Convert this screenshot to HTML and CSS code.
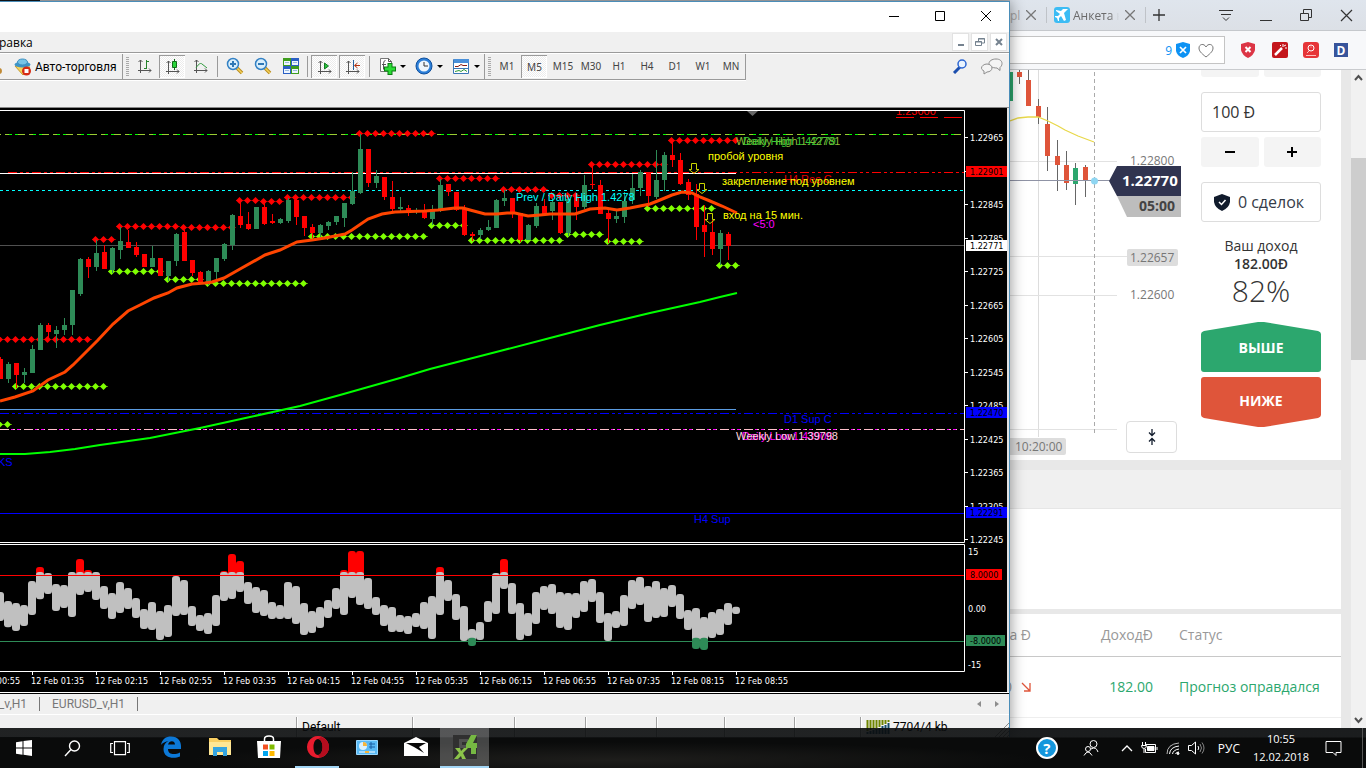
FILE: index.html
```html
<!DOCTYPE html>
<html lang="ru">
<head>
<meta charset="utf-8">
<title>Торговый терминал</title>
<link rel="stylesheet" href="styles.css">
</head>
<body>
<div class="desktop">
  <div class="windows">
    <section class="terminal">
      <div class="titlebar">
        <button class="win-btn" aria-label="Свернуть"><svg width="12" height="12"><path d="M1 6.500h10" stroke="#000"/></svg></button>
        <button class="win-btn" aria-label="Развернуть"><svg width="12" height="12"><path d="M1.500 1.500h9v9h-9z" fill="none" stroke="#000"/></svg></button>
        <button class="win-btn" aria-label="Закрыть"><svg width="12" height="12"><path d="M1 1l10 10M11 1L1 11" stroke="#000"/></svg></button>
      </div>
      <div class="menubar">
        <button class="menu-item">Справка</button>
        <div class="mdi">
          <button aria-label="Свернуть график"><svg width="14" height="14"><path d="M4 10h6" stroke="#75828f" stroke-width="2"/></svg></button>
          <button aria-label="Восстановить график"><svg width="14" height="14" fill="none" stroke="#75828f"><path d="M5.500 6V3.500h6V8H9M5 4h7M2.500 6.500h6v4h-6zM2 7h7"/></svg></button>
          <button aria-label="Закрыть график"><svg width="14" height="14"><path d="M4 4l6 6M10 4l-6 6" stroke="#75828f" stroke-width="2"/></svg></button>
        </div>
      </div>
      <div class="toolbar-row">
        <div class="toolbar">
          <button class="auto">
            <svg width="20" height="20"><circle cx="-1" cy="14" r="3" fill="#c08a35"/></svg>
            <svg width="18" height="18"><path d="M1 8l8 9 7-8z" fill="#f4d35b" stroke="#c59b2d"/><ellipse cx="8.500" cy="6.500" rx="8" ry="3" fill="#3c94c8"/><ellipse cx="8.500" cy="4" rx="5" ry="3" fill="#76c4e8" stroke="#3c8fbf"/><circle cx="12.500" cy="13" r="4.500" fill="#d62b14"/><path d="M10.500 11h4v4h-4z" fill="#fff"/></svg>
            <span>Авто-торговля</span>
          </button>
          <i class="edge"></i><i class="grip"></i>
          <button class="tool" aria-label="Бары"><svg width="18" height="18"><path d="M4.500 3v13M2 13.500h13M2.500 5l2-2 2 2M13 11.500l2 2-2 2" stroke="#555" fill="none"/><path d="M10.500 3v9M8 11.500h3M11 4.500h2" stroke="#26822b" fill="none"/></svg></button>
          <button class="tool on" aria-label="Свечи"><svg width="18" height="18"><path d="M4.500 3v13M2 13.500h13M2.500 5l2-2 2 2M13 11.500l2 2-2 2" stroke="#555" fill="none"/><path d="M10.500 1v11" stroke="#126b18"/><path d="M8.500 3.500h4v6h-4z" fill="#29d53a" stroke="#126b18"/></svg></button>
          <button class="tool" aria-label="Линия"><svg width="18" height="18"><path d="M4.500 3v13M2 13.500h13M2.500 5l2-2 2 2M13 11.500l2 2-2 2" stroke="#555" fill="none"/><path d="M4 11c3-5 5-5 6-4l5 4" stroke="#2f9a3d" fill="none"/></svg></button>
          <i class="sep"></i>
          <button class="tool" aria-label="Увеличить"><svg width="18" height="18"><path d="M11 11l5 5" stroke="#b88b1c" stroke-width="3.500"/><path d="M11 11l5 5" stroke="#f5d25c" stroke-width="1.500"/><circle cx="7" cy="7" r="5.500" fill="#d9effc" stroke="#3381c4" stroke-width="1.500"/><path d="M4 7h6M7 4v6" stroke="#2f78b5" stroke-width="2"/></svg></button>
          <button class="tool" aria-label="Уменьшить"><svg width="18" height="18"><path d="M11 11l5 5" stroke="#b88b1c" stroke-width="3.500"/><path d="M11 11l5 5" stroke="#f5d25c" stroke-width="1.500"/><circle cx="7" cy="7" r="5.500" fill="#d9effc" stroke="#3381c4" stroke-width="1.500"/><path d="M4 7h6" stroke="#2f78b5" stroke-width="2"/></svg></button>
          <button class="tool" aria-label="Мозаика"><svg width="18" height="18"><path d="M1 1h8v8H1zM9 9h8v8H9z" fill="#3f9d1e"/><path d="M9 1h8v8H9zM1 9h8v8H1z" fill="#2a5fc4"/><path d="M2 4h6v4H2zM10 4h6v4h-6zM2 12h6v4H2zM10 12h6v4h-6z" fill="#eef6ff"/><path d="M3 5.500h4M11 5.500h4M3 13.500h4M11 13.500h4" stroke="#9bbbe0"/></svg></button>
          <i class="sep"></i>
          <button class="tool on" aria-label="Автопрокрутка"><svg width="18" height="18"><path d="M4.500 3v13M2 13.500h13M2.500 5l2-2 2 2M13 11.500l2 2-2 2" stroke="#555" fill="none"/><path d="M8.500 5v6l4-3z" fill="#27c23b" stroke="#147a22"/></svg></button>
          <button class="tool on" aria-label="Сдвиг графика"><svg width="18" height="18"><path d="M4.500 3v13M2 13.500h13M2.500 5l2-2 2 2M13 11.500l2 2-2 2" stroke="#555" fill="none"/><path d="M9.500 2v10" stroke="#235e9b"/><path d="M11 7.500h5M13.500 5l-3 2.500 3 2.500" stroke="#b43210" fill="none"/></svg></button>
          <i class="sep"></i>
          <button class="tool drop" aria-label="Индикаторы"><svg width="20" height="20"><path d="M3.500 2.500h8l3 3v10h-11z" fill="#fff" stroke="#777"/><path d="M11.500 2.500v3h3M8.500 4.500q-2 0-2 3v6M5 8.500h4" fill="none" stroke="#555"/><path d="M13 7v12M7 13h12" stroke="#0b7d12" stroke-width="5"/><path d="M13 8v10M8 13h10" stroke="#2bdc35" stroke-width="3"/></svg><b></b></button>
          <button class="tool drop" aria-label="Периоды"><svg width="20" height="20"><circle cx="10" cy="10" r="8" fill="#2c7fd8" stroke="#0e4f9d"/><circle cx="10" cy="10" r="5.500" fill="#edf6fd"/><path d="M10 6v4h4" stroke="#333" fill="none"/></svg><b></b></button>
          <button class="tool drop" aria-label="Шаблоны"><svg width="20" height="20"><path d="M2.500 3.500h15v14h-15z" fill="#fff" stroke="#3a76b5"/><path d="M3 3h15v4H3z" fill="#4a90d9"/><path d="M4 10.500h3l3-2 2 1h4" stroke="#8c1d12" fill="none"/><path d="M3 12.500h14" stroke="#3a76b5"/><path d="M4 15.500l4-1 2 1 3-2 3 2" stroke="#2d9936" fill="none"/></svg><b></b></button>
          <i class="sep edge2"></i><i class="grip"></i>
          <button class="tool tf">M1</button><button class="tool tf on">M5</button><button class="tool tf">M15</button><button class="tool tf">M30</button><button class="tool tf">H1</button><button class="tool tf">H4</button><button class="tool tf">D1</button><button class="tool tf">W1</button><button class="tool tf">MN</button>
        </div>
        <div class="tool-right">
          <button aria-label="Поиск"><svg width="16" height="16"><path d="M8 9l-6 6" stroke="#1c4fae" stroke-width="3"/><circle cx="10" cy="6" r="4" fill="#eaf4ff" stroke="#2c66d2" stroke-width="1.500"/></svg></button>
          <button aria-label="Сообщения"><svg width="24" height="18" fill="#f4f4f4" stroke="#8d8d8d"><path d="M16 2c4 0 6 2 6 4.500 0 2-1 3-2 4v3l-3-2.500c-5 0-8-2-8-4.500S12 2 16 2z"/><path d="M7 7c3 0 5 2 5 4s-2 4-5 4l-3 2v-3c-2-1-2.500-2-2.500-3C1.500 9 4 7 7 7z"/></svg></button>
        </div>
      </div>
      <svg class="chart" id="chart" viewBox="0 108 1007 584" preserveAspectRatio="xMaxYMid meet" role="img" aria-label="График EURUSD"></svg>
      <div class="tabs">
        <button>EURUSD_v,H1</button><button>EURUSD_v,H1</button>
        <span class="tab-arrows"><button aria-label="Назад"><svg width="6" height="8"><path d="M5 1v6L1 4z" fill="#8d8d8d"/></svg></button><button aria-label="Вперёд"><svg width="6" height="8"><path d="M1 1v6l4-3z" fill="#8d8d8d"/></svg></button></span>
      </div>
      <div class="status">
        <span class="s-first"></span><span class="s-default">Default</span><span class="s-102"></span><span class="s-71"></span><span class="s-71"></span><span class="s-68"></span><span class="s-70"></span><span class="s-66"></span>
        <span class="s-net"><svg width="24" height="14"><path d="M1.500 0v11M4.500 0v10M7.500 0v9M10.500 0v8M13.500 0v7M16.500 0v5M19.500 0v4M22.500 0v2" stroke="#6e8500" stroke-width="2"/><path d="M1.500 12v2M4.500 11v3M7.500 10v4M10.500 9v5M13.500 8v6M16.500 6v8M19.500 5v9M22.500 3v11" stroke="#124b6b" stroke-width="2"/></svg>7704/4 kb</span>
        <svg class="resize" width="15" height="15"><path d="M1 15L15 1M5 15L15 5M9 15l6-6M13 15l2-2" stroke="#888"/></svg>
      </div>
    </section>

    <section class="browser">
      <div class="tabstrip">
        <span class="tab-cut">pl</span>
        <button class="x" aria-label="Закрыть вкладку"><svg width="10" height="10"><path d="M0 0l10 10M10 0L0 10" stroke="#777" stroke-width="1.300"/></svg></button>
        <i class="tdiv"></i>
        <svg class="fav" width="16" height="16"><rect width="16" height="16" rx="3" fill="#3cbcf4"/><path d="M2 3l5 1 2-2h5l-4 4 2 7-2 1-3-5-2 2v3l-1 0-1-3-2-1v-1h3l2-2-4-3z" fill="#fff"/></svg>
        <span class="tab-title">Анкета на</span>
        <button class="x" aria-label="Закрыть вкладку"><svg width="10" height="10"><path d="M0 0l10 10M10 0L0 10" stroke="#777" stroke-width="1.300"/></svg></button>
        <i class="tdiv"></i>
        <button class="x plus" aria-label="Новая вкладка"><svg width="12" height="12"><path d="M6 0v12M0 6h12" stroke="#333" stroke-width="1.300"/></svg></button>
        <div class="wctl">
          <button aria-label="Меню вкладок"><svg width="14" height="13" fill="none" stroke="#333"><path d="M0 1.500h14M2 5.500h10M4 8.500l3 3 3-3"/></svg></button>
          <button aria-label="Свернуть"><svg width="13" height="13"><path d="M0 11.500h12" stroke="#333"/></svg></button>
          <button aria-label="Восстановить"><svg width="13" height="13" fill="none" stroke="#333"><path d="M3.500 4V.5h8v8H9M.5 4.500h8v7h-8z"/></svg></button>
          <button aria-label="Закрыть"><svg width="13" height="13"><path d="M1 1l11 11M12 1L1 12" stroke="#333" stroke-width="1.200"/></svg></button>
        </div>
      </div>
      <div class="addressbar">
        <div class="field"><span>9</span>
          <svg width="14" height="16"><path d="M7 0l7 2v7q-1 5-7 7-6-2-7-7V2z" fill="#0d92f4"/><path d="M4 5l6 6M10 5l-6 6" stroke="#fff" stroke-width="1.700"/></svg>
          <svg width="16" height="15"><path d="M8 14C3 10 1 8 1 5c0-4 5-5 7-1 2-4 7-3 7 1 0 3-2 5-7 9z" fill="none" stroke="#777"/></svg>
        </div>
        <button aria-label="Блокировщик"><svg width="16" height="16"><path d="M8 0l7 2v6q-1 5-7 8-6-3-7-8V2z" fill="#dc3545"/><path d="M5.500 5l5 5M10.500 5l-5 5" stroke="#fff" stroke-width="2"/></svg></button>
        <button aria-label="Инструмент"><svg width="16" height="16"><rect width="16" height="16" rx="2" fill="#c4161c"/><path d="M3 13l7-7" stroke="#fff" stroke-width="2.500"/><path d="M11 2v3M13 6h2M12 4l2-1M8 3l1 1" stroke="#fff"/></svg></button>
        <button aria-label="Цены"><svg width="16" height="16"><rect width="16" height="16" rx="3" fill="#e63538"/><circle cx="8" cy="6" r="3" fill="none" stroke="#fff"/><path d="M6 9l-2 2M8 4.500v1M3 13.500h10" stroke="#fbb"/></svg></button>
        <button class="dbtn">D</button>
      </div>
      <div class="viewport">
        <main class="page">
          <div class="trade">
            <div class="live">
              <svg id="live" width="190" height="390" viewBox="0 70 190 390" role="img" aria-label="Текущий курс"></svg>
              <button class="collapse" aria-label="Свернуть график"><svg width="12" height="18" fill="none" stroke="#111b2c" stroke-width="1.300"><path d="M6 1v6M3 4.500l3 3 3-3M6 17v-6M3 13.500l3-3 3 3"/></svg></button>
            </div>
            <form class="order">
              <div class="pair clipped"><button type="button" aria-label="Меньше время"></button><button type="button" aria-label="Больше время"></button></div>
              <input class="amount" aria-label="Сумма" value="100 Đ">
              <div class="pair"><button type="button" aria-label="Уменьшить"><svg width="12" height="12"><path d="M1 6h10" stroke="#000" stroke-width="2"/></svg></button><button type="button" aria-label="Увеличить"><svg width="12" height="12"><path d="M1 6h10M6 1v10" stroke="#000" stroke-width="2"/></svg></button></div>
              <button type="button" class="deals"><svg width="16" height="17"><path d="M8 0l8 3v5q-1 6-8 9-7-3-8-9V3z" fill="#111b2c"/><path d="M5 8l2.500 2.500L11.500 6" fill="none" stroke="#fff" stroke-width="1.500"/></svg>0 сделок</button>
              <p class="income">Ваш доход</p>
              <p class="sum">182.00Đ</p>
              <p class="pct">82%</p>
              <button type="button" class="bet up"><svg viewBox="0 0 120 50" preserveAspectRatio="none"><path d="M0 47V12q0-2 3-3L57 0q3-0.500 6 0l54 9q3 1 3 3v35q0 3-3 3H3q-3 0-3-3z" fill="#2ca76e"/></svg><span>ВЫШЕ</span></button>
              <button type="button" class="bet down"><svg viewBox="0 0 120 50" preserveAspectRatio="none"><path d="M3 0h114q3 0 3 3v35q0 2-3 3l-54 9q-3 .5-6 0L3 41q-3-1-3-3V3q0-3 3-3z" fill="#df553a"/></svg><span>НИЖЕ</span></button>
            </form>
          </div>
          <div class="gap-tall"></div>
          <div class="subhead"></div>
          <div class="blank"></div>
          <div class="gap-low"></div>
          <table class="history">
            <thead><tr><th class="c-sum">Ставка Đ</th><th class="c-inc">ДоходĐ</th><th>Статус</th></tr></thead>
            <tbody><tr><td class="c-sum"><div class="bid"><span>100</span><svg width="10" height="10"><path d="M1 1l8 8M9 1v8H3" fill="none" stroke="#df553a" stroke-width="1.300"/></svg></div></td><td class="c-inc">182.00</td><td>Прогноз оправдался</td></tr></tbody>
          </table>
        </main>
        <div class="gutter"></div>
        <div class="scroll"><svg width="15" height="15"><path d="M4 10l3.500-4 3.500 4" fill="none" stroke="#505050" stroke-width="2"/></svg><i></i><svg width="15" height="15"><path d="M4 5l3.500 4L11 5" fill="none" stroke="#505050" stroke-width="2"/></svg></div>
      </div>
    </section>
  </div>

  <footer class="taskbar">
    <button class="t48" aria-label="Пуск"><svg width="16" height="16" fill="#fff"><path d="M0 2.200l6.500-.9v6.200H0zM7.500 1.100L16 0v7.500H7.500zM0 8.500h6.500v6.200L0 13.800zM7.500 8.500H16V16l-8.500-1.200z"/></svg></button>
    <button class="t48" aria-label="Поиск"><svg width="17" height="17" fill="none" stroke="#fff" stroke-width="1.400"><circle cx="10.500" cy="6" r="5"/><path d="M7 9.500L1 16"/></svg></button>
    <button class="t48" aria-label="Представление задач"><svg width="20" height="15" fill="none" stroke="#fff" stroke-width="1.200"><path d="M4.500.7h11v13h-11zM3 2.500H.7v9H3M17 2.500h2.300v9H17"/></svg></button>
    <div class="apps">
      <button aria-label="Edge"><svg width="22" height="22"><path d="M1 9C2 3 6 0.500 11 0.500c7 0 10 5 10 9.500v3H8c0 6 7 6 12 3.500v4C14 23 3.500 22.500 3.500 13c0-4 2-6.500 5-8C4.500 5.500 2 7.500 1 9zm7-0.500h7C15 4 9 4 8 8.500z" fill="#0c78d7"/></svg></button>
      <button aria-label="Проводник"><svg width="22" height="20"><path d="M0 1h8l2 2h12v15H0z" fill="#f9cf62"/><path d="M0 5h22v13H0z" fill="#ffe795"/><path d="M4 19v-9h14v9h-4v-4H8v4z" fill="#35a4e0"/></svg></button>
      <button aria-label="Магазин"><svg width="24" height="24"><path d="M7.500 8V4q0-3 4.500-3t4.500 3v4" fill="none" stroke="#fff" stroke-width="1.500"/><path d="M0 6h24l-1 17H1z" fill="#fff"/><path d="M6 9.500h5v5H6z" fill="#f25022"/><path d="M12.500 9.500h5v5h-5z" fill="#7fba00"/><path d="M6 16h5v5H6z" fill="#00a4ef"/><path d="M12.500 16h5v5h-5z" fill="#ffb900"/></svg></button>
      <button class="run" aria-label="Opera"><svg width="24" height="24"><path fill-rule="evenodd" d="M12 1a11 11 0 1 0 0.010 0zM12 4c3 0 4.500 4 4.500 8s-1.500 8-4.500 8-4.500-4-4.500-8S9 4 12 4z" fill="#e81c2e"/><path d="M15 2c10 3 11 16 1 20-2 .5-3 0-4-2 3 0 4.500-4 4.500-8S15 4 12 4z" fill="#b40d1e"/></svg></button>
      <button aria-label="Панель управления"><svg width="22" height="18"><path d="M.5 2.500h21v14H.5z" fill="#58b9f5" stroke="#9bd9ff"/><circle cx="7" cy="8" r="4" fill="#d9f1ff"/><path d="M7 8V4a4 4 0 0 1 4 4z" fill="#f5b53c"/><path d="M13 6h6M13 9h6M15 4v7" stroke="#1a5fa4"/><path d="M3 14h16" stroke="#fff"/><path d="M9 14h4" stroke="#f5b53c" stroke-width="2"/></svg></button>
      <button aria-label="Почта"><svg width="24" height="20"><path d="M0 6l12-6 12 6v13H0z" fill="#fff"/><path d="M2 6h20l-7 4 5 6-10-6z" fill="#080808"/></svg></button>
      <button class="active" aria-label="Терминал"><svg width="24" height="24"><path d="M0 0h24v24H0z" fill="#303030"/><path d="M6 4h9v3H9v3h5v3H6z" fill="#505050"/><path d="M18 0h6l-4 8h4v5h-1v6h-5v-6h-5V9z" fill="#76b843"/><path d="M2 13h5l1 3 3-3h4l-5 5 3 6H9l-1-3-3 3H1l5-6z" fill="#8bc34a"/></svg></button>
    </div>
    <div class="tray">
      <button class="help" aria-label="Помощь">?</button>
      <button class="people" aria-label="Люди"><svg width="16" height="16" fill="none" stroke="#fff"><circle cx="10.500" cy="4" r="3.500"/><path d="M8 9q5-3 7 3"/><circle cx="5" cy="9" r="2.500"/><path d="M1 15.500q4-7 8 0"/></svg></button>
      <button class="chev" aria-label="Скрытые значки"><svg width="12" height="8"><path d="M1 7l5-5 5 5" fill="none" stroke="#fff" stroke-width="1.300"/></svg></button>
      <button aria-label="Батарея"><svg width="17" height="14" fill="none" stroke="#fff"><path d="M5 3.500h9.500v8H4.500V8M1.500 1v3M4.500 1v3M.5 4.500h5q0 3-2.500 3t-2.500-3M16 6v3M3 8v4"/><path d="M6.500 5.500H13v4H6.500z" fill="#fff"/></svg></button>
      <button aria-label="Сеть"><svg width="14" height="14" fill="none" stroke="#fff"><path d="M1 13Q1 3 13 2" opacity=".7"/><path d="M3.500 13Q4 6 13 5M6.500 13Q7 9 13 8M9.500 13q.5-2 3.500-2"/><circle cx="12" cy="12.500" r="1" fill="#fff"/></svg></button>
      <button aria-label="Звук"><svg width="17" height="14" fill="none" stroke="#fff"><path d="M.5 4.500h3l4-3.500v12l-4-3.500h-3zM10 5q1.500 2 0 4"/><path d="M12 3q3 4 0 8M14 1.500q4 5.500 0 11" opacity=".5"/></svg></button>
      <button class="lang">РУС</button>
      <time class="clock"><span>10:55</span><span>12.02.2018</span></time>
      <button class="note" aria-label="Уведомления"><svg width="17" height="17"><path d="M1 1.500h15v11h-5v3l-3-3H1z" fill="none" stroke="#fff"/></svg></button>
      <i class="peek"></i>
    </div>
  </footer>
</div>
<script src="charts.js"></script>
</body>
</html>
```
FILE: styles.css
```css
* { box-sizing: border-box; }
body { margin: 0; font-family: "Open Sans", "Noto Sans", sans-serif; font-size: 12px; color: #000; }
button { margin: 0; padding: 0; border: 0; background: none; font: inherit; color: inherit; display: flex; align-items: center; justify-content: center; flex: none; }
svg { display: block; flex: none; }
p { margin: 0; }

.desktop { height: 100vh; display: flex; flex-direction: column; overflow: hidden; background: linear-gradient(90deg, #14161a 40px, #b8babd 40px); }
.windows { flex: 1; min-height: 0; display: grid; grid-template-columns: minmax(0, 1fr) 356px; }

/* terminal window */
.terminal { margin: 1px 0 -9px; z-index: 2; min-height: 0; display: flex; flex-direction: column; background: #f0f0f0; border-top: 1px solid #4a8db8; border-right: 1px solid #4a8db8; box-shadow: 0 0 14px rgba(0, 0, 0, .45); }
.titlebar { height: 30px; flex: none; background: #fff; display: flex; justify-content: flex-end; }
.win-btn { width: 46px; height: 28px; }
.menubar { height: 21px; flex: none; display: flex; justify-content: space-between; border-bottom: 1px solid #9a9a9a; }
.menu-item { margin-left: -16px; height: 20px; }
.mdi { display: flex; gap: 2px; padding: 1px 2px 1px 0; }
.mdi button { width: 17px; background: #fff; border: 1px solid #e2e2e2; }
.toolbar-row { height: 55px; flex: none; display: flex; justify-content: space-between; align-items: flex-start; border-top: 1px solid #fff; border-bottom: 1px solid #888; }
.toolbar { height: 26px; display: flex; border-bottom: 1px solid #9a9a9a; border-right: 1px solid #9a9a9a; box-shadow: 0 1px #fff; }
.auto { width: 122px; height: 25px; justify-content: flex-start; }
.auto svg:first-child { width: 14px; }
.auto span { margin-left: 3px; font: 12px Roboto, sans-serif; white-space: nowrap; }
.edge { width: 1px; background: #9a9a9a; margin-right: 3px; }
.grip { width: 3px; margin: 3px 2px 3px 0; background: repeating-linear-gradient(#aaa 0 1px, #f0f0f0 1px 2px); }
.sep { width: 1px; background: #9a9a9a; margin: 2px 3px 2px 2px; }
.edge2 { margin: 0 3px 0 0; }
.tool { width: 28px; height: 24px; color: #444; border: 1px solid transparent; }
.tool.on { background: repeating-conic-gradient(#fff 0 25%, #ececec 0 50%) 0 0 / 2px 2px padding-box; border: solid #9a9a9a; border-width: 1px 0 0 1px; box-shadow: inset -1px -1px #fff; width: 26px; height: 23px; margin: 1px 2px 0 0; }
.drop { width: 37px; justify-content: flex-start; padding-left: 3px; gap: 3px; }
.drop b { border: solid transparent; border-width: 3px 3px 0; border-top-color: #000; }
.tf { font: 10px "Noto Sans", sans-serif; }
.tool-right { display: flex; gap: 12px; padding: 3px 5px 0 0; }
.chart { flex: 1; min-height: 0; width: 100%; background: #000; border-right: 2px solid #e3e3e3; }
.tabs { height: 23px; flex: none; display: flex; align-items: center; border-top: 1px solid #fff; border-bottom: 1px solid #fff; color: #777; box-shadow: inset 0 1px #000; }
.tabs > button { height: 14px; padding: 0 12px; border-right: 1px solid #777; font: 12px Roboto, sans-serif; }
.tabs > button:first-child { margin-left: -58px; }
.tab-arrows { margin-left: auto; display: flex; gap: 12px; padding-right: 9px; }
.status { height: 22px; flex: none; display: flex; padding-top: 2px; font-family: Roboto, sans-serif; }
.status > span { border-right: 1px solid #a0a0a0; box-shadow: 1px 0 #fff; line-height: 20px; flex: none; }
.status .s-first { flex: 1; }
.status .s-default { width: 116px; padding-left: 5px; }
.s-102 { width: 102px; } .s-71 { width: 71px; } .s-68 { width: 68px; } .s-70 { width: 70px; } .s-66 { width: 66px; }
.status .s-net { width: 133px; display: flex; align-items: center; gap: 3px; padding-left: 5px; border: 0; box-shadow: none; }
.resize { align-self: flex-end; }

/* browser window */
.browser { min-width: 0; min-height: 0; display: flex; flex-direction: column; background: #f7f8fa; }
.tabstrip { height: 31px; flex: none; display: flex; align-items: center; background: linear-gradient(#dfe5ed, #dce0e6); border-bottom: 1px solid #c5c8cc; color: #6b6b6b; }
.tab-cut { width: 16px; overflow: hidden; color: #a5a5a5; }
.x { width: 10px; }
.tdiv { width: 1px; height: 16px; background: #bfc3c8; margin: 0 7px 0 10px; }
.tab-title { font-size: 12px; width: 46px; overflow: hidden; white-space: nowrap; margin: 0 6px 0 3px; -webkit-mask-image: linear-gradient(90deg, #000 80%, transparent); }
.plus { width: 12px; }
.wctl { margin-left: auto; display: flex; gap: 27px; padding-right: 13px; }
.addressbar { height: 39px; flex: none; display: flex; align-items: center; gap: 15px; border-bottom: 1px solid #c9cbce; padding-right: 18px; justify-content: space-between; }
.field { width: 215px; height: 28px; background: #fff; border: 1px solid #c4c4c4; border-left: 0; display: flex; align-items: center; justify-content: flex-end; gap: 8px; padding-right: 10px; }
.field span { color: #0d92f4; margin-right: -4px; }
.dbtn { width: 14px; height: 14px; background: #37549b; color: #fff; font-weight: 700; font-size: 12px; }
.viewport { flex: 1; min-height: 0; display: flex; overflow: hidden; }
.page { flex: 1; min-width: 0; background: #fff; }
.gutter { width: 10px; background: #e8e8e8; }
.scroll { width: 15px; background: #f1f1f1; display: flex; flex-direction: column; justify-content: space-between; }
.scroll i { height: 202px; margin: 0 0 280px; background: #cdcdcd; }
.trade { height: 390px; display: flex; justify-content: space-between; }
.live { position: relative; width: 190px; }
.collapse { position: absolute; left: 116px; bottom: 7px; width: 51px; height: 32px; background: #fff; border: 1px solid #ddd; border-radius: 4px; }
.order { width: 120px; margin-right: 20px; display: flex; flex-direction: column; color: #333; }
.pair { display: flex; gap: 5px; height: 30px; margin-top: 5px; }
.pair button { flex: 1; background: #f4f4f4; border-radius: 3px; }
.pair.clipped { height: 7px; margin: 0; }
.pair.clipped button { border-radius: 0 0 3px 3px; }
.amount { width: 100%; height: 40px; margin-top: 15px; border: 1px solid #ddd; border-radius: 3px; padding: 0 10px; font: 16px "Open Sans", "Noto Sans", sans-serif; color: #333; background: #fff; }
.deals { height: 40px; margin-top: 15px; border: 1px solid #ddd; border-radius: 3px; font-size: 16px; gap: 8px; padding-right: 4px; color: #353b48; white-space: nowrap; }
.income { font-size: 14px; line-height: 18px; margin-top: 15px; text-align: center; }
.sum { font-size: 14px; line-height: 18px; font-weight: 600; text-align: center; }
.pct { font-size: 30px; line-height: 36px; font-weight: 300; text-align: center; }
.bet { height: 50px; display: grid; color: #fff; font-weight: 700; font-size: 14px; }
.bet > * { grid-area: 1 / 1; justify-self: center; }
.bet svg { width: 120px; height: 50px; }
.up { margin-top: 13px; }
.down { margin-top: 5px; }
.down span { padding-bottom: 4px; }
.gap-tall { height: 10px; background: #e8e8e8; }
.subhead { height: 39px; background: #f0f0f0; border-bottom: 1px solid #e6e6e6; }
.blank { height: 100px; }
.gap-low { height: 5px; background: #e8e8e8; }
.history { width: 100%; border-collapse: collapse; table-layout: fixed; font-size: 14px; white-space: nowrap; }
.history th { height: 42px; padding: 0; color: #999; font-weight: 400; text-align: left; border-bottom: 1px solid #c8c8c8; }
.history td { height: 61px; padding: 0; color: #2ca76e; border-bottom: 1px solid #eee; }
.history .c-sum { width: 21px; direction: rtl; overflow: hidden; color: #999; }
.bid { direction: ltr; width: 23px; display: flex; align-items: center; justify-content: flex-end; gap: 9px; }
.history .c-inc { width: 148px; text-align: right; padding-right: 26px; }

/* taskbar */
.taskbar { height: 40px; flex: none; z-index: 3; display: flex; color: #fff; background: radial-gradient(ellipse at 45% 80%, rgba(50, 48, 44, .5), transparent 40%), linear-gradient(rgba(10, 12, 13, .9) 9px, #0a0b0b 10px); }
.t48 { width: 48px; }
.apps { display: flex; margin-left: 2px; }
.apps button { width: 49px; border-bottom: 2px solid transparent; }
.apps .run { border-image: linear-gradient(90deg, transparent 4px, #a3d6f5 4px 44px, transparent 44px) 2; }
.apps .active { background: rgba(255, 255, 255, .24); border-bottom-color: #a3d6f5; }
.tray { margin-left: auto; display: flex; align-items: center; gap: 8px; }
.help { width: 22px; height: 22px; border-radius: 50%; border: 2px solid #fff; background: #1496dc; font-weight: 700; font-size: 15px; }
.people { margin: 0 14px 0 17px; }
.lang { font-size: 12px; margin-left: 5px; }
.clock { width: 62px; font-size: 11px; line-height: 18px; margin: 0 5px 0 2px; white-space: nowrap; display: flex; flex-direction: column; align-items: center; }
.peek { width: 1px; height: 40px; background: #555; margin: 0 3px 0 12px; }

/* chart text */
.axis { font: 9px "DejaVu Sans Condensed", "Noto Sans", sans-serif; fill: #fff; }
.mark { font: 11px "Liberation Sans", sans-serif; }
.quote { font: 12px "Open Sans", "Noto Sans", sans-serif; fill: #777; }
.tag { font: 700 15px "Open Sans", "Noto Sans", sans-serif; fill: #fff; }
.timer { font: 700 14px "Open Sans", "Noto Sans", sans-serif; fill: #444; }
```
FILE: charts.js
```javascript
const NS = 'http://www.w3.org/2000/svg';
function add(parent, name, attrs, text) {
  const el = document.createElementNS(NS, name);
  for (const key in attrs) el.setAttribute(key, attrs[key]);
  if (text) el.textContent = text;
  parent.appendChild(el);
  return el;
}
const line = (p, x1, y, x2, color, dash) =>
  add(p, 'path', { d: `M${x1} ${y + 0.5}H${x2}`, stroke: color, 'stroke-dasharray': dash || 'none', fill: 'none' });
const rect = (p, x, y, width, height, fill) => add(p, 'rect', { x, y, width, height, fill });

const chart = document.getElementById('chart');
const RED = '#ff0000', GREEN = '#2e8b57', LIME = '#7fff00';
const STEP = 8, TOP = 110;

// horizontal levels
line(chart, -8, 134, 964, '#9acd32', '9 4 4 7');
line(chart, 3, 134, 964, '#00ff00', '0 6 3 3 3 9');
line(chart, 8, 172, 964, RED, '9 3 3 3 3 3');
line(chart, 0, 173, 736, '#fff');
line(chart, 0, 190, 964, '#00ffff', '3 3');
line(chart, 0, 245, 964, '#505050');
line(chart, 0, 409, 736, '#5b9be0');
line(chart, 0, 413, 964, '#0000ff', '9 3 3 3 3 3');
line(chart, 0, 429, 964, '#ffc0cb', '9 3 3 3 3 3');
line(chart, 11, 429, 964, '#ff00ff', '2 4 3 15');
line(chart, 0, 513, 964, '#0000ff');

// fractal levels: y offset, first bar, last bar, colour
const rows = [
  [229,0,11,RED],[129,12,14,RED],[116,15,22,RED],[117,23,29,RED],[90,30,32,RED],[91,33,35,RED],[87,36,44,RED],
  [23,45,54,RED],[68,55,62,RED],[79,63,68,RED],[85,69,72,RED],[54,74,83,RED],[30,84,92,RED],
  [276,2,13,LIME],[161,14,20,LIME],[169,21,25,LIME],[173,26,38,LIME],[126,39,53,LIME],[115,54,58,LIME],
  [130,59,70,LIME],[124,71,75,LIME],[131,76,80,LIME],[98,81,89,LIME],[155,90,92,LIME],[314,0,1,LIME]
];
for (const [y, from, to, color] of rows) {
  line(chart, from * STEP - 4, TOP + y, to * STEP + 4, color).setAttribute('opacity', '.55');
  for (let k = from; k <= to; k++) {
    add(chart, 'path', { d: `M${k * STEP - 0.5} ${TOP + y - 3}l3.500 3.500-3.500 3.500-3.500-3.500z`, fill: color });
  }
}

// bars: direction, high, body top, body bottom, low
const bars = `r 247 249 269 269,g 252 254 269 273,r 253 253 265 278,g 258 262 265 273,g 235 239 263 263,g 213 215 240 240,r 213 215 222 228,g 216 220 224 238,g 208 215 220 225,g 180 180 215 225,g 148 149 184 186,r 147 149 157 168,g 130 143 157 161,r 135 142 159 159,g 137 138 160 163,g 117 131 140 149,r 120 132 138 138,r 132 137 145 147,r 144 144 157 157,g 136 148 157 157,r 148 148 166 166,g 151 151 166 171,g 123 124 151 156,r 120 122 151 151,r 150 150 163 166,r 161 162 172 172,g 160 161 172 175,g 148 148 162 170,g 133 134 149 151,g 104 105 135 140,r 92 106 115 118,r 102 114 119 120,g 97 97 119 119,r 93 97 114 115,r 104 111 113 114,g 108 109 113 114,g 88 90 111 113,r 88 90 107 115,r 106 106 118 126,r 114 117 123 128,g 114 115 123 127,g 111 112 116 120,g 106 106 112 115,g 93 93 108 117,g 62 81 94 95,g 24 39 83 84,r 39 39 73 77,g 60 66 73 78,r 67 67 87 90,r 71 87 99 101,g 87 97 99 101,r 95 98 102 106,g 98 100 102 104,r 94 100 108 109,g 95 99 109 115,g 69 75 100 102,r 74 74 82 86,r 82 82 100 101,r 95 99 125 126,r 122 124 126 131,g 118 120 125 129,g 110 117 120 121,g 89 90 118 118,g 80 88 91 96,r 88 88 104 108,r 103 103 130 132,g 114 115 130 130,g 93 96 116 118,r 89 96 105 106,g 88 92 101 110,r 92 92 123 124,g 88 89 123 126,r 85 88 97 110,g 65 75 97 99,r 55 74 75 79,r 70 75 104 104,r 100 103 109 133,g 100 106 109 113,g 82 91 107 113,g 64 78 90 94,g 60 62 78 86,r 62 62 86 97,g 40 70 87 89,g 42 45 70 81,r 32 45 50 57,r 43 50 74 75,r 69 72 85 90,r 74 84 117 130,r 95 115 122 147,r 110 122 139 145,g 120 123 139 155,r 122 124 136 150`;

const orange = '0,291 15,287 33,281 48,270 65,262 73,255 98,230 113,214 128,201 140,195 154,188 168,183 177,178 192,174 205,173 212,172 224,168 240,159 265,145 280,140 297,132 312,130 325,128 340,125 345,124 352,120 368,109 382,104 395,102 425,101 438,100 455,98 463,98 470,100 485,104 497,104 507,103 515,103 528,106 540,105 550,104 575,104 590,99 605,98 617,100 630,98 650,94 660,90 672,85 682,82 692,83 700,87 710,91 722,96 737,103';
const green = '0,344 25,344 50,342 75,339 100,335 150,328 200,318 250,307 300,296 340,285 400,268 430,259 500,241 550,228 600,215 650,203 700,192 720,187 737,183';

bars.split(',').forEach((bar, k) => {
  const [dir, high, top, bottom, low] = bar.split(' ');
  const color = dir === 'r' ? RED : GREEN;
  rect(chart, k * STEP, TOP + +high, 1, low - high, color);
  rect(chart, k * STEP - 2, TOP + +top, 5, Math.max(1, bottom - top), color);
});
const averages = add(chart, 'g', { transform: `translate(0 ${TOP})`, fill: 'none' });
add(averages, 'polyline', { points: orange, stroke: '#ff4500', 'stroke-width': 3 });
add(averages, 'polyline', { points: green, stroke: '#00ff00', 'stroke-width': 2 });

// oscillator in thirds of a unit: peak above +8 (0 = none), top, bottom, trough below -8
const osc = `0 156 243,0 183 262,0 189 273,0 195 258,0 123 225,81 96 178,0 99 162,0 132 213,0 135 204,0 96 231,57 96 165,90 96 156,0 96 180,0 138 207,0 159 237,0 126 219,0 144 207,0 174 234,0 207 267,0 186 270,0 213 300,0 195 291,0 108 228,0 120 225,0 198 258,0 225 273,0 219 282,0 165 258,93 96 183,42 96 177,63 96 156,0 126 192,0 141 219,0 150 228,0 186 237,0 195 237,0 126 237,0 138 252,0 189 285,0 213 279,0 201 264,0 180 234,0 144 207,90 96 225,33 96 174,33 96 195,0 114 207,0 171 225,0 195 258,0 201 276,0 225 276,0 228 282,0 219 261,0 186 267,0 168 297,81 96 225,0 120 183,0 162 240,0 198 303,0 267 303 318,0 246 300,0 183 246,0 99 222,57 96 147,0 129 222,0 189 300,0 219 288,0 156 252,0 138 210,0 132 222,0 156 264,0 159 270,0 159 234,0 123 216,0 117 186,0 156 249,0 219 303,0 213 264,0 165 258,0 120 207,0 111 195,0 138 246,0 123 234,0 144 231,0 135 201,0 162 237,0 210 270,0 204 303 327,0 231 303 330,0 216 294,0 207 285,0 189 255,0 200 222`;
const capsule = (k, from, to, fill) => add(chart, 'rect', { x: k * STEP - 4, y: 540 + from / 3, width: 8, height: (to - from) / 3, rx: 3, fill });
line(chart, 0, 575, 964, RED);
line(chart, 0, 641, 964, GREEN);
osc.split(',').forEach((item, k) => {
  const [peak, top, bottom, trough] = item.split(' ').map(Number);
  if (peak) capsule(k, peak, 120, RED);
  capsule(k, top, bottom, '#c0c0c0');
  if (trough) capsule(k, 293, trough, GREEN);
});
line(chart, 0, 575, 964, RED);
line(chart, 0, 641, 964, GREEN);

// annotations
const mark = (x, y, text, fill) => add(chart, 'text', { x, y, fill, class: 'mark' }, text);
mark(736, 145, 'Weekly High 1.42781', '#8fbc3a');
mark(743, 145, 'Daily High 1.42779', '#36c936');
mark(742, 440, 'Daily Low 1.43906', '#ff00ff');
mark(736, 440, 'Weekly Low 1.39798', '#ffd6dc');
mark(516, 201, 'Prev / Daily High 1.4278', '#00ffff');
mark(708, 160, 'пробой уровня', '#ffff00');
mark(784, 183, 'H4 Res C', '#e00000');
mark(722, 185, 'закрепление под уровнем', '#ffff00');
mark(723, 219, 'вход на 15 мин.', '#ffff00');
mark(753, 228, '<5:0', '#ff00ff');
mark(784, 423, 'D1 Sup C', '#0000ff');
mark(694, 523, 'H4 Sup', '#0000ff');
mark(-2, 466, 'KS', '#0000ff');
mark(896, 115, '1.23000', RED);
rect(chart, 0, 108, 1007, 2, '#000');
line(chart, 896, 117, 964, RED, '18 6');
add(chart, 'path', { d: 'M747 111h11l-5.500 5z', fill: '#666' });
for (const [x, y] of [[694, 163], [702, 183], [710, 213]]) {
  add(chart, 'path', { d: `M${x - 2.5} ${y + 0.5}h5v6h2.500l-5 4-5-4h2.500z`, fill: 'none', stroke: '#c8d400' });
}

// frames and price scale
add(chart, 'path', { d: 'M0 110.500H964.500V542.500H0M0 544.500H964.500V671.500H0', fill: 'none', stroke: '#fff' });
const label = (x, y, text, fill = '#fff') => add(chart, 'text', { x, y, class: 'axis', style: `fill:${fill}` }, text);
['1.22965', '', '1.22845', '1.22785', '1.22725', '1.22665', '1.22605', '1.22545', '1.22485', '1.22425', '1.22365', '1.22305', '1.22245'].forEach((price, i) => {
  const y = Math.round(137 + i * 33.5);
  line(chart, 965, y, 968, '#fff');
  label(970, y + 4, price);
});
const badge = (y, text, bg, fg, w = 41, x = 970) => { rect(chart, 966, y, w, 11, bg); label(x, y + 9, text, fg); };
badge(166, '1.22901', RED, '#000');
badge(240, '1.22771', '#fff', '#000');
badge(407, '1.22470', '#0000ff', '#000');
badge(507, '1.22291', '#0000ff', '#000');
badge(569, '8.0000', RED, '#000', 36);
badge(635, '-8.0000', GREEN, '#000', 39);
label(968, 555, '15');
label(968, 612, '0.00');
label(968, 668, '-15');

['00:55', '01:35', '02:15', '02:55', '03:35', '04:15', '04:55', '05:35', '06:15', '06:55', '07:35', '08:15', '08:55'].forEach((time, i) => {
  const x = 64 * i - 32;
  rect(chart, x, 672, 1, 3, '#fff');
  label(x - 1, 684, '12 Feb ' + time);
});

// live quote chart
const live = document.getElementById('live');
rect(live, 28, 70, 1, 367, '#ddd');
line(live, 0, 161, 107, '#e2e2e2');
line(live, 0, 256, 117, '#e2e2e2');
line(live, 0, 295, 107, '#e2e2e2');
line(live, 0, 429, 107, '#e2e2e2');
add(live, 'path', { d: 'M84.500 72V433', stroke: '#aaa', 'stroke-dasharray': '4 3' });
[[0, 1, 72, 72, 101, 101], [9, 0, 70, 72, 77, 84], [18, 0, 70, 80, 106, 106], [28, 0, 99, 106, 117, 124], [37, 0, 107, 124, 156, 171], [47, 0, 140, 156, 165, 191], [56, 0, 151, 165, 183, 190], [65, 1, 163, 168, 184, 205], [75, 0, 165, 167, 181, 197]].forEach(([x, up, high, top, bottom, low]) => {
  rect(live, x, high, 1, low - high, '#666');
  rect(live, x - 2, top, 5, bottom - top, up ? '#2ca76e' : '#df553a');
});
add(live, 'polyline', { points: '0,121 8,118 18,117 28,117 38,121 48,126 55,130 68,136 84,142', fill: 'none', stroke: '#e8d84a', 'stroke-width': 1.3 });
line(live, 0, 180, 100, '#8f93a5');
add(live, 'circle', { cx: 84.5, cy: 181, r: 3.5, fill: '#8fd6f2' });
add(live, 'text', { x: 120, y: 165, class: 'quote' }, '1.22800');
add(live, 'path', { d: 'M107 196h64v21h-54z', fill: '#bdbdbd' });
add(live, 'path', { d: 'M99 181l8-15h64v30h-64z', fill: '#303450' });
add(live, 'text', { x: 112, y: 186, class: 'tag' }, '1.22770');
add(live, 'text', { x: 129, y: 211, class: 'timer' }, '05:00');
add(live, 'rect', { x: 117, y: 249, width: 51, height: 17, rx: 2, fill: '#ddd' });
add(live, 'text', { x: 120, y: 262, class: 'quote' }, '1.22657');
add(live, 'text', { x: 120, y: 299, class: 'quote' }, '1.22600');
add(live, 'rect', { x: -2, y: 438, width: 58, height: 17, rx: 2, fill: '#ddd' });
add(live, 'text', { x: 5, y: 451, class: 'quote' }, '10:20:00');
```
